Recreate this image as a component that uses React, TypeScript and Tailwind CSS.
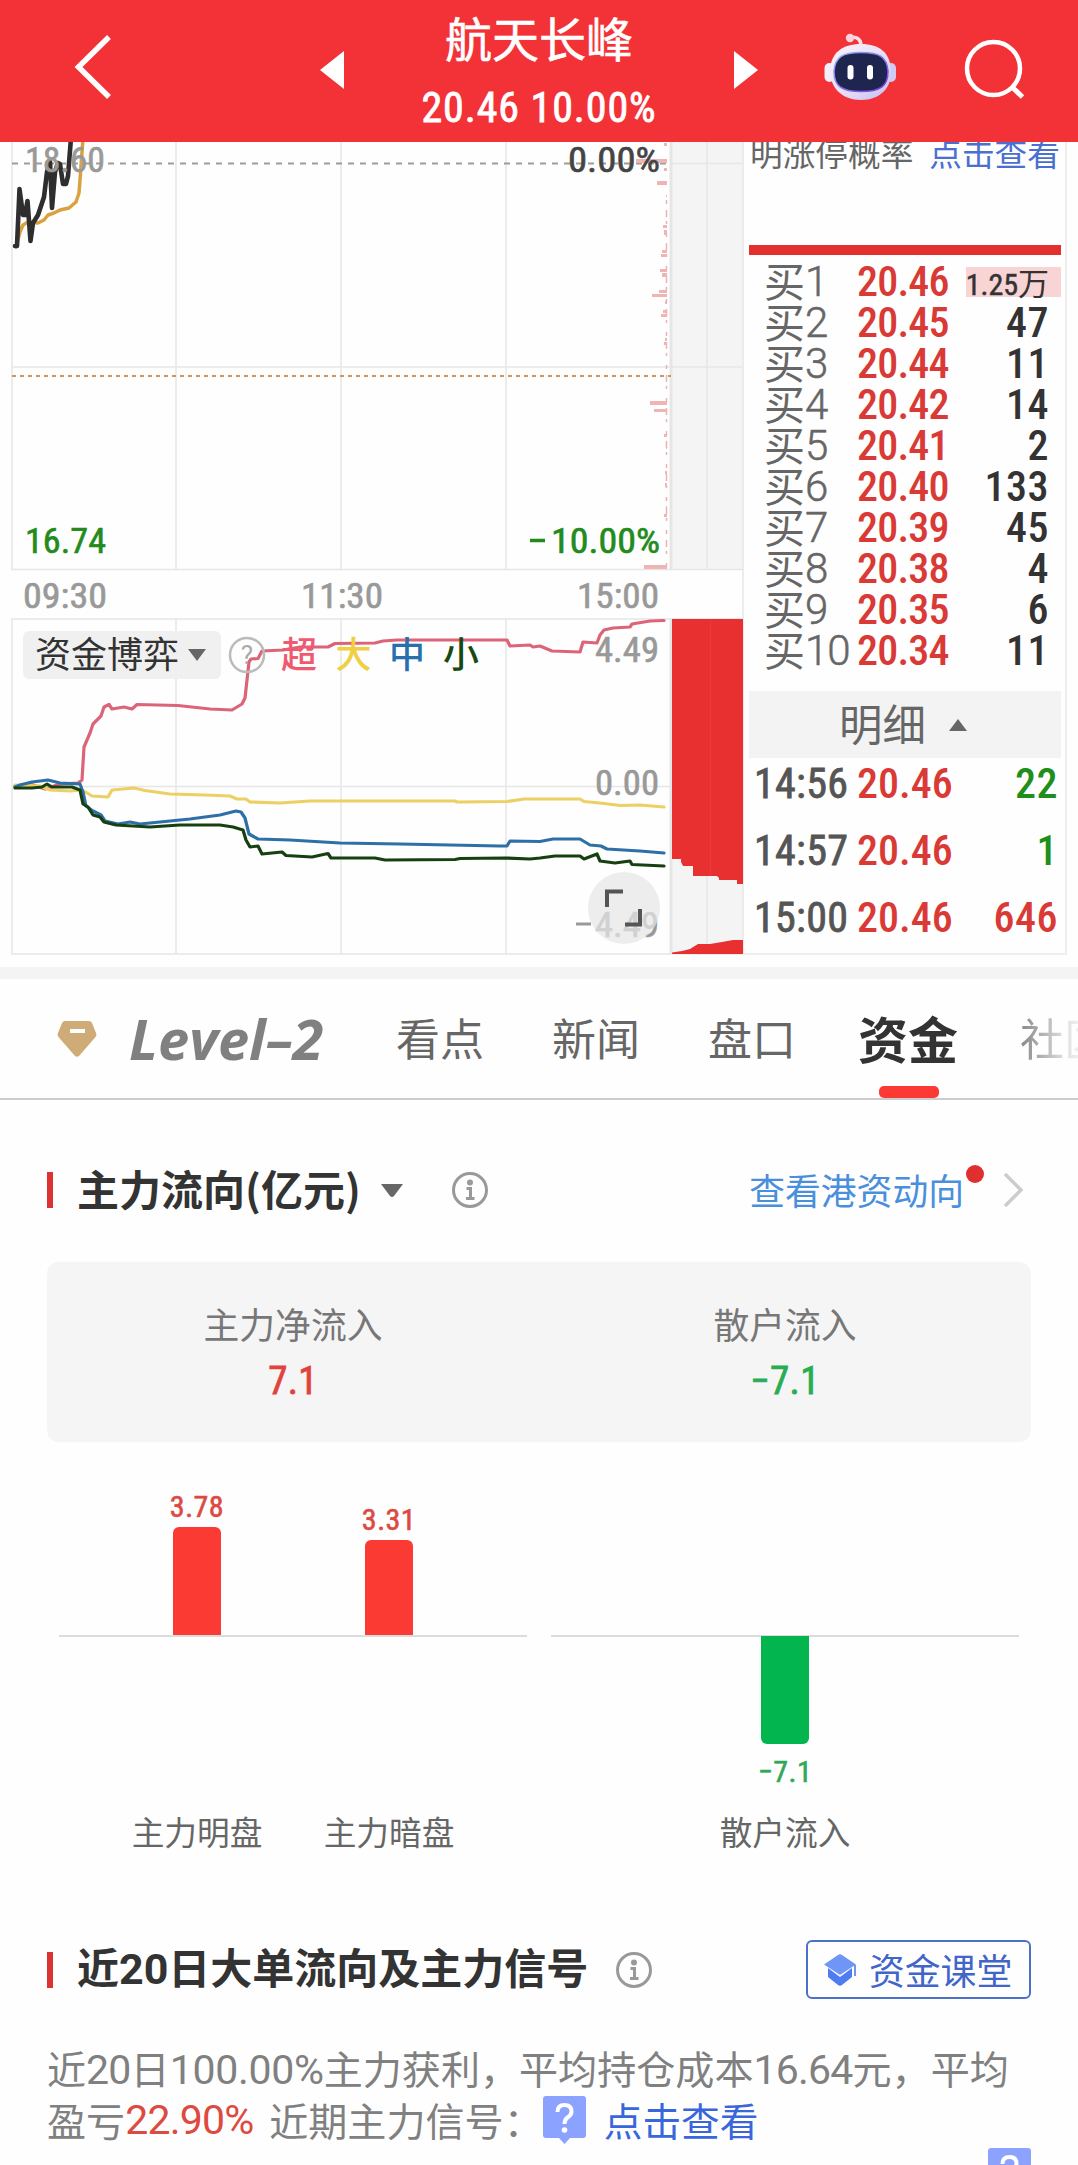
import type { ReactNode } from "react";

type Order = { label: string; price: string; qty: string };
type Tick = { time: string; price: string; qty: string; tone: string };

const ORDERS: Order[] = [
  { label: "1", price: "20.46", qty: "1.25万" },
  { label: "2", price: "20.45", qty: "47" },
  { label: "3", price: "20.44", qty: "11" },
  { label: "4", price: "20.42", qty: "14" },
  { label: "5", price: "20.41", qty: "2" },
  { label: "6", price: "20.40", qty: "133" },
  { label: "7", price: "20.39", qty: "45" },
  { label: "8", price: "20.38", qty: "4" },
  { label: "9", price: "20.35", qty: "6" },
  { label: "10", price: "20.34", qty: "11" },
];

const TICKS: Tick[] = [
  { time: "14:56", price: "20.46", qty: "22", tone: "text-[#1f8f1c]" },
  { time: "14:57", price: "20.46", qty: "1", tone: "text-[#1f8f1c]" },
  { time: "15:00", price: "20.46", qty: "646", tone: "text-[#d93a36]" },
];

// [y, width, height] of the turnover-by-price bars hugging the right axis.
const VOLUME_BARS: [number, number, number][] = [
  [143, 3, 3], [159, 31, 4], [168, 3, 3], [181, 10, 4], [195, 1, 2],
  [225, 4, 3], [230, 3, 5], [250, 5, 3], [254, 6, 3], [269, 7, 3],
  [273, 5, 4], [290, 8, 3], [294, 15, 3], [301, 2, 3], [310, 4, 3],
  [314, 6, 3], [338, 2, 3], [342, 3, 3], [401, 17, 4], [409, 13, 3],
  [434, 3, 3], [446, 1, 3], [471, 2, 3], [483, 2, 4], [506, 1, 2],
  [514, 3, 3], [565, 23, 4],
];

const PRICE =
  "15,246 17,246 19.5,189 23,215 25,215 27.5,201 30.5,241 33,223 38,215 44,197 47,172 50,162 52,208 55,172 58,163 60,164 63,184 66,184 68,176 71,138";
const AVERAGE =
  "16,247 20,232 23,225 28,222 38,223 44,220 48,215 54,213 60,210 69,208 76,202 79,193 80,180 83,138";
const FLOW_SUPER =
  "15,786 30,784 45,789 60,784 78,783 82,780 84,747 90,733 93,724 101,716 104,707 109,704.5 112,709 124,707 132,709 137,704.5 178,705.5 210,709 232,710 242,704 245,698 249,662 251,659 258,658.5 262,651 283,650 300,647 328,647 335,643.5 375,643 383,641 397,640 507,640 510,646 530,645 533,647 540,646 552,651 580,652 583,642 597,643 600,635 604,630 613,628 630,627 632,624 650,621 664,620.5";
const FLOW_BIG =
  "15,785 40,786 50,790 70,791 82,790 92,796 108,797 112,790 134,788 145,790.5 170,794 205,795 230,796 237,799 246,799 250,802 280,803 310,801 380,801 455,801 457,802 507,801.5 524,799 580,799 584,801.5 600,803 620,805.5 640,805 664,807";
const FLOW_MID =
  "15,787 20,785 32,782 48,780 60,783 80,784 83,792 86,806 93,811 101,815 105,821 118,824 130,822 140,824 160,822 190,819 220,815 236,811 241,812 245,818 249,834 258,839 290,840 340,843 400,844 500,846 507,846 510,841 540,841.5 553,839 580,839 590,845 601,846 607,849 640,851 664,853";
const FLOW_SMALL =
  "15,788 32,788 42,787 47,784 52,787 72,787 80,790 83,804 88,807 93,815 100,817 104,822 116,825 150,827 180,825 220,825 233,827 243,830 246,840 250,847 258,846 262,854 282,852 286,855.5 312,857 328,853.5 331,858 375,858 385,860 455,859.5 460,858.5 505,858 530,859 540,858 555,856 580,856 584,859 597,854 600,861 615,863 630,861 632,864.5 664,866";

// Condensed figures by default; `wide` is the normal cut used in running text.
function Num({
  wide = false,
  className = "",
  children,
}: {
  wide?: boolean;
  className?: string;
  children: ReactNode;
}) {
  const stretch = wide ? "[font-stretch:100%]" : "[font-stretch:75%]";
  return <span className={`font-['Roboto',sans-serif] ${stretch} ${className}`}>{children}</span>;
}

function AxisLabel({
  x,
  y,
  width,
  fill = "#999",
  children,
}: {
  x: number;
  y: number;
  width: number;
  fill?: string;
  children: string;
}) {
  return (
    <text
      x={x}
      y={y}
      fill={fill}
      stroke={fill}
      strokeWidth={0.6}
      textLength={width}
      lengthAdjust="spacingAndGlyphs"
      className="font-['Roboto',sans-serif] text-[35px] [font-stretch:75%]"
    >
      {children}
    </text>
  );
}

function Line({ points, color, width = 3.2 }: { points: string; color: string; width?: number }) {
  return (
    <polyline
      points={points}
      fill="none"
      stroke={color}
      strokeWidth={width}
      strokeLinejoin="round"
      strokeLinecap="round"
    />
  );
}

function Robot() {
  return (
    <svg width="74" height="70" viewBox="0 0 74 70" className="shrink-0">
      <defs>
        <linearGradient id="shell" x1="0" y1="0" x2="1" y2="1">
          <stop offset="0" stopColor="#fff4fa" />
          <stop offset=".6" stopColor="#e2dcf7" />
          <stop offset="1" stopColor="#c3bcf0" />
        </linearGradient>
        <linearGradient id="rim" x1="0" y1="0" x2="1" y2="1">
          <stop offset="0" stopColor="#8fb8ee" />
          <stop offset="1" stopColor="#7a35d8" />
        </linearGradient>
      </defs>
      <path d="M27 5.500c6-1 10 2 10 8" fill="none" stroke="#fbdfe8" strokeWidth="3.500" />
      <circle cx="26" cy="6" r="4.200" fill="#fbd3dc" />
      <rect x="0.500" y="31" width="10" height="19" rx="5" fill="#f3eefb" />
      <rect x="62" y="31" width="10" height="19" rx="5" fill="#cfc9f4" />
      <path
        d="M37 12c19 0 29 9 30 26 1 18-11 30-30 30S6 56 6 38c1-17 12-26 31-26z"
        fill="url(#shell)"
      />
      <path
        d="M37 20.500c18 0 26 4 27 19 0 15-8 20-27 20s-27-5-27-20c1-15 9-19 27-19z"
        fill="#1e2650"
        stroke="url(#rim)"
        strokeWidth="1.500"
      />
      <rect x="23.500" y="33" width="6" height="14.500" rx="3" fill="#fff" />
      <rect x="43" y="33" width="6" height="14.500" rx="3" fill="#fff" />
    </svg>
  );
}

function Header() {
  return (
    <header className="flex h-[142px] shrink-0 items-start bg-[#f23237] text-white">
      <svg width="40" height="70" viewBox="0 0 40 70" className="mt-8 ml-[74px]">
        <path d="M35 5L4.500 35L35 65" fill="none" stroke="#fff" strokeWidth="5.500" />
      </svg>
      <svg width="24" height="38" viewBox="0 0 24 38" className="mt-[51px] ml-[206px]">
        <path d="M24 0V38L0 19z" fill="#fff" />
      </svg>
      <div className="flex w-[390px] flex-col items-center">
        <h1 className="mt-[11px] h-[52px] text-[47px] leading-[52px] [-webkit-text-stroke:0.6px_white]">
          航天长峰
        </h1>
        <Num className="mt-[22px] text-[42px] leading-[46px] tracking-[0.9px] [-webkit-text-stroke:0.8px]">
          20.46 10.00%
        </Num>
      </div>
      <svg width="24" height="38" viewBox="0 0 24 38" className="mt-[51px]">
        <path d="M0 0V38L24 19z" fill="#fff" />
      </svg>
      <div className="mt-[32px] ml-[66px] flex">
        <Robot />
      </div>
      <svg width="66" height="66" viewBox="0 0 66 66" className="mt-[36px] ml-[63px]">
        <circle cx="32.500" cy="32.500" r="26.500" fill="none" stroke="#fff" strokeWidth="4.500" />
        <path d="M51 51L61.500 61" stroke="#fff" strokeWidth="5" />
      </svg>
    </header>
  );
}

function Chart() {
  return (
    <svg width="744" height="825" viewBox="0 142 744 825" className="shrink-0">
      <rect x="671" y="142" width="72" height="427" fill="#f4f4f4" />
      <rect x="671" y="619" width="72" height="335" fill="#f4f4f4" />
      <g stroke="#e6e6e6" strokeWidth="1.500" fill="none">
        <path d="M12 142V569.500H743V142M12 619H743V954H12z" />
        <path d="M12 367H743M12 786.500H671M671 163.500H743" />
        <path d="M176 142V569M341 142V569M506 142V569M707 142V569" />
        <path d="M176 619V954M341 619V954M506 619V954M707 619V954" />
        <path d="M671 142V569M671 619V954" strokeWidth="3" />
        <path d="M743 569V619" />
      </g>

      <path d="M12 163.500H667" stroke="#9c9c9c" strokeWidth="2" strokeDasharray="6 6" />
      <path d="M12 376H671" stroke="#c79a5c" strokeWidth="2" strokeDasharray="4 4" />
      <path d="M666.500 200V569" stroke="#ecb3b3" strokeWidth="1.500" strokeDasharray="4 6 7 4 3 9" />
      {VOLUME_BARS.map(([y, w, h]) => (
        <rect key={y} x={667 - w} y={y} width={w} height={h} fill="#f0b4b4" />
      ))}

      <Line points={AVERAGE} color="#d9a23f" width={3.5} />
      <Line points={PRICE} color="#2e2e2e" width={4.6} />

      <AxisLabel x={25} y={172} width={80}>18.60</AxisLabel>
      <AxisLabel x={568} y={172} width={92} fill="#444">0.00%</AxisLabel>
      <AxisLabel x={25} y={553} width={81} fill="#228b1c">16.74</AxisLabel>
      <path d="M530 540.500H545" stroke="#228b1c" strokeWidth="3.500" />
      <AxisLabel x={551} y={553} width={109} fill="#228b1c">10.00%</AxisLabel>
      <AxisLabel x={23} y={608} width={84}>09:30</AxisLabel>
      <AxisLabel x={301} y={608} width={82}>11:30</AxisLabel>
      <AxisLabel x={577} y={608} width={82}>15:00</AxisLabel>

      <Line points={FLOW_SUPER} color="#dc6478" />
      <Line points={FLOW_BIG} color="#ecd064" />
      <Line points={FLOW_MID} color="#2f6fa8" />
      <Line points={FLOW_SMALL} color="#164010" />

      <rect x="23" y="631" width="198" height="48" rx="6" fill="#efefef" fillOpacity=".92" />
      <text x="35" y="668" fill="#333" className="text-[36px]">资金博弈</text>
      <path d="M188 649H206L197 661z" fill="#666" />
      <circle cx="247" cy="655" r="17" fill="none" stroke="#bbb" strokeWidth="2.500" />
      <text x="247" y="664" textAnchor="middle" fill="#aaa" className="font-['Roboto'] text-[26px]">
        ?
      </text>
      <g className="text-[36px] font-medium">
        <text x="281" y="668" fill="#f05a70">超</text>
        <text x="335.500" y="668" fill="#f0cf45">大</text>
        <text x="389" y="668" fill="#2870ad">中</text>
        <text x="443" y="668" fill="#164a10">小</text>
      </g>

      <AxisLabel x={595} y={662} width={64}>4.49</AxisLabel>
      <AxisLabel x={595} y={795} width={64}>0.00</AxisLabel>
      <path d="M576 924H591" stroke="#999" strokeWidth="3" />
      <AxisLabel x={595} y={937} width={64}>4.49</AxisLabel>

      <path
        d="M672 619H743V884H737V880H719V878L717 876H693V866H683L681 862V859H672z"
        fill="#e83030"
      />
      <path d="M672 954V952.500L682 951L690 949L698 944H710L722 942L733 940H743V954z" fill="#e83030" />
      <path d="M710.500 619V876" stroke="#ea3a3a" />

      <circle cx="624" cy="908" r="36" fill="#e6e6e6" fillOpacity=".72" />
      <g fill="none" stroke="#555" strokeWidth="4">
        <path d="M607 907V891.500H623" />
        <path d="M640 909V924.500H625" />
      </g>
    </svg>
  );
}

function OrderRow({ order }: { order: Order }) {
  const top = order.label === "1";
  return (
    <div className="flex h-[41px] items-center pl-[15px] whitespace-nowrap">
      <span className="-mt-[5px] w-[41px] text-[41px] leading-[41px] text-[#666]">买</span>
      <Num
        wide
        className="w-[52px] text-[42px] leading-[41px] font-light tracking-[-1px] text-[#666] [-webkit-text-stroke:0.5px]"
      >
        {order.label}
      </Num>
      <Num className="w-[100px] text-[42px] leading-[41px] font-medium tracking-[-0.8px] text-[#d93a36]">
        {order.price}
      </Num>
      {top ? (
        <span className="ml-auto flex h-[30px] w-[95px] items-center justify-end bg-[#f9d4d4] pr-[12px] text-[#333]">
          <Num className="mt-[7px] text-[30px] leading-[30px] [-webkit-text-stroke:0.5px]">
            1.25
          </Num>
          <span className="mt-[1px] text-[31px] leading-[30px]">万</span>
        </span>
      ) : (
        <Num className="ml-auto pr-[12px] text-[42px] leading-[41px] font-medium tracking-[0.5px] text-[#333]">
          {order.qty}
        </Num>
      )}
    </div>
  );
}

function OrderBook() {
  return (
    <aside className="mb-[12px] flex w-[323px] flex-col border-r-2 border-b-2 border-[#eee] pr-[4px] pl-[5px]">
      <div className="flex h-[103px] justify-between overflow-hidden whitespace-nowrap">
        <span className="-mt-[9px] ml-[1px] text-[32.7px] leading-[38px] text-[#666]">
          明涨停概率
        </span>
        <span className="-mt-[9px] mr-[1px] text-[32.7px] leading-[38px] text-[#4a6fd0]">
          点击查看
        </span>
      </div>
      <div className="mb-[6px] h-[10px] bg-[#e42f2f]" />
      {ORDERS.map((o) => (
        <OrderRow key={o.label} order={o} />
      ))}
      <div className="mt-[20px] flex h-[67px] shrink-0 items-center bg-[#f3f3f3] pl-[90px]">
        <span className="-mt-[3px] text-[43.5px] leading-[60px] text-[#666]">明细</span>
        <svg width="18" height="12" viewBox="0 0 18 12" className="ml-[23px]">
          <path d="M0 12H18L9 0z" fill="#666" />
        </svg>
      </div>
      <div className="-mt-[8px]">
        {TICKS.map((t) => (
          <div key={t.time} className="flex h-[67px] items-center pl-[5px] text-[42px]">
            <Num className="w-[103px] tracking-[0.3px] text-[#555] [-webkit-text-stroke:0.8px]">
              {t.time}
            </Num>
            <Num className="w-[97px] font-medium text-[#d93a36]">{t.price}</Num>
            <Num className={`ml-auto pr-[3px] font-medium tracking-[0.5px] ${t.tone}`}>{t.qty}</Num>
          </div>
        ))}
      </div>
    </aside>
  );
}

function Tabs() {
  return (
    <nav className="relative flex h-[121px] shrink-0 items-center overflow-hidden border-b-2 border-[#ccc] whitespace-nowrap text-[#666]">
      <svg width="40" height="36" viewBox="0 0 40 36" className="ml-[57px] shrink-0">
        <path d="M8 0H32Q34 0 35 2L39 12Q40 14 38.500 16L22 35Q20 36.500 18 35L1.500 16Q0 14 1 12L5 2Q6 0 8 0z" fill="#cfab78" />
        <rect x="13" y="8" width="15" height="4" fill="#fff" />
      </svg>
      <span className="-mt-[2px] ml-[32px] w-[267px] shrink-0 font-['Open_Sans',sans-serif] text-[56px] leading-[60px] font-bold text-[#808080] italic">
        Level–2
      </span>
      <span className="-mt-[3px] w-[156px] shrink-0 text-[44px]">看点</span>
      <span className="-mt-[3px] w-[156px] shrink-0 text-[44px]">新闻</span>
      <span className="-mt-[3px] w-[150px] shrink-0 text-[44px]">盘口</span>
      <span className="-mt-[3px] w-[162px] shrink-0 text-[50px] font-bold text-[#333]">资金</span>
      <span className="-mt-[3px] shrink-0 bg-gradient-to-r from-[#888] via-[#ddd] via-50% to-white to-80% bg-clip-text text-[44px] text-transparent">
        社区
      </span>
      <span className="absolute bottom-0 left-[879px] h-[12px] w-[60px] rounded-[5px] bg-[#fb3a35]" />
    </nav>
  );
}

function InfoIcon() {
  return (
    <svg width="38" height="38" viewBox="0 0 38 38" fill="none" className="shrink-0">
      <circle cx="19" cy="19" r="16.500" stroke="#999" strokeWidth="3" />
      <circle cx="19" cy="11.500" r="3" fill="#999" />
      <path d="M15.500 17.500H19.500V27M15 27.500H23.500" stroke="#999" strokeWidth="3" />
    </svg>
  );
}

function SectionTitle({ children }: { children: ReactNode }) {
  return (
    <>
      <span className="h-[36px] w-[6px] bg-[#dc3232]" />
      <h2 className="-mt-[4px] ml-[24px] text-[42px] leading-[48px] font-bold text-[#333]">
        {children}
      </h2>
    </>
  );
}

function Summary({ label, value, tone }: { label: string; value: string; tone: string }) {
  return (
    <div className="flex flex-1 flex-col items-center">
      <span className="mt-[39px] text-[35.8px] leading-[44px] text-[#777]">{label}</span>
      <Num
        className={`mt-[13px] text-[39px] leading-[46px] tracking-[0.3px] [-webkit-text-stroke:0.8px] ${tone}`}
      >
        {value}
      </Num>
    </div>
  );
}

function FlowColumn({
  label,
  value,
  up,
  height,
}: {
  label: string;
  value: string;
  up: boolean;
  height: number;
}) {
  const num = (
    <Num
      className={`text-[30px] leading-[30px] tracking-[0.5px] [-webkit-text-stroke:0.6px] ${
        up ? "mt-[4px] mb-[5px] text-[#dc4a44]" : "mt-[13px] text-[#2fa957]"
      }`}
    >
      {value}
    </Num>
  );
  return (
    <div className="flex w-[192px] flex-col items-center">
      <div className="flex h-[193px] flex-col items-center justify-end">
        {up ? num : null}
        {up ? <div className="w-[48px] rounded-t-[6px] bg-[#fb3a33]" style={{ height }} /> : null}
      </div>
      <div className="flex h-[174px] flex-col items-center pt-[1px]">
        {up ? null : (
          <div className="w-[48px] rounded-b-[6px] bg-[#02b54e]" style={{ height }} />
        )}
        {up ? null : num}
      </div>
      <span className="text-[32.7px] leading-[44px] text-[#666]">{label}</span>
    </div>
  );
}

function HelpBubble({ className = "" }: { className?: string }) {
  return (
    <svg width="43" height="50" viewBox="0 0 43 50" className={`shrink-0 ${className}`}>
      <path d="M3 0H40Q43 0 43 3V39Q43 42 40 42H27L21.500 48L16 42H3Q0 42 0 39V3Q0 0 3 0z" fill="#8ba3ff" />
      <path
        d="M14.500 16Q14.500 9 21.500 9Q28.500 9 28.500 15.500Q28.500 19 24.500 21.500Q21.500 23.500 21.500 28"
        fill="none"
        stroke="#fff"
        strokeWidth="4"
      />
      <circle cx="21.500" cy="34" r="2.800" fill="#fff" />
    </svg>
  );
}

export default function App() {
  return (
    <div className="flex h-[2165px] w-[1078px] flex-col overflow-hidden bg-[#fefefe] font-['Noto_Sans_CJK_SC',sans-serif]">
      <Header />
      <div className="flex h-[825px] shrink-0">
        <Chart />
        <OrderBook />
      </div>
      <div className="h-[12px] shrink-0 bg-[#f4f4f4]" />
      <Tabs />

      <section className="px-[47px]">
        <div className="mt-[66px] flex h-[48px] items-center">
          <SectionTitle>主力流向(亿元)</SectionTitle>
          <svg width="22" height="13" viewBox="0 0 22 13" className="mr-[48px] ml-[20px]">
            <path d="M0 0H22L13 12Q11 14 9 12z" fill="#666" />
          </svg>
          <InfoIcon />
          <span className="relative -mt-[2px] ml-auto text-[35.8px] leading-[44px] text-[#4a8fdc]">
            查看港资动向
            <span className="absolute -top-[2px] -right-[20px] size-[18px] rounded-full bg-[#df2f2f]" />
          </span>
          <svg width="22" height="36" viewBox="0 0 22 36" className="mr-[6px] ml-[39px]">
            <path d="M2 2L18 18L2 34" fill="none" stroke="#ccc" strokeWidth="3.500" />
          </svg>
        </div>

        <div className="mt-[48px] flex h-[180px] rounded-[12px] bg-[#f5f5f5]">
          <Summary label="主力净流入" value="7.1" tone="text-[#e0433d]" />
          <Summary label="散户流入" value="−7.1" tone="text-[#28ad55]" />
        </div>

        <div className="flex h-[411px]">
          <div className="flex w-[492px] bg-[linear-gradient(#dcdcdc,#dcdcdc)] bg-[length:468px_2px] bg-[position:12px_193px] bg-no-repeat pl-[54px]">
            <FlowColumn label="主力明盘" value="3.78" up height={108} />
            <FlowColumn label="主力暗盘" value="3.31" up height={95} />
          </div>
          <div className="flex w-[492px] justify-center bg-[linear-gradient(#dcdcdc,#dcdcdc)] bg-[length:468px_2px] bg-[position:12px_193px] bg-no-repeat">
            <FlowColumn label="散户流入" value="−7.1" up={false} height={108} />
          </div>
        </div>
      </section>

      <section className="px-[47px]">
        <div className="mt-[87px] flex h-[59px] items-center">
          <SectionTitle>
            近<Num wide className="text-[43px]">20</Num>日大单流向及主力信号
          </SectionTitle>
          <span className="ml-[27px] flex">
            <InfoIcon />
          </span>
          <button className="ml-auto flex h-[59px] w-[225px] items-center rounded-[6px] border-2 border-[#4a72c8] pl-[15px] text-[35.8px] leading-[44px] text-[#3f66c8]">
            <svg width="34" height="32" viewBox="0 0 34 32" className="mr-[12px]">
              <path d="M5 14L17 23L29 14V23L19 31Q17 32.500 15 31L5 23z" fill="#4f7cf0" />
              <path d="M15 1Q17 -.3 19 1L33 10.500L17 21L1 10.500z" fill="#7096f5" />
              <path d="M32 11V22" stroke="#7096f5" strokeWidth="2" />
            </svg>
            <span className="-mt-[2px]">资金课堂</span>
          </button>
        </div>

        <p className="mt-[42px] h-[52px] text-[39.1px] leading-[52px] whitespace-nowrap text-[#808080]">
          近<Num wide className="text-[41px] tracking-[-0.8px]">20</Num>日
          <Num wide className="text-[41px] tracking-[-0.3px]">100.00%</Num>
          主力获利，平均持仓成本
          <Num wide className="text-[41px] tracking-[-0.8px]">16.64</Num>元，平均
        </p>
        <p className="flex h-[52px] items-center text-[39.1px] leading-[52px] whitespace-nowrap text-[#808080]">
          盈亏
          <Num wide className="mt-[2px] w-[144px] text-[41px] tracking-[-0.8px] text-[#dc4a40]">
            22.90%
          </Num>
          近期主力信号：
          <HelpBubble className="mt-[4px]" />
          <span className="ml-[18px] text-[38.7px] text-[#3a66dc]">点击查看</span>
        </p>
      </section>
      <HelpBubble className="mt-[3px] mr-[47px] self-end" />
    </div>
  );
}
